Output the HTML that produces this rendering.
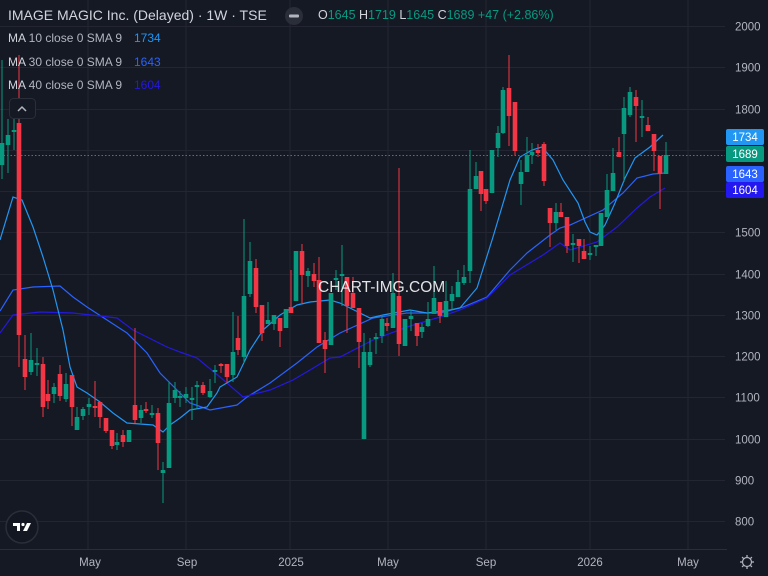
<!DOCTYPE html>
<html><head><meta charset="utf-8">
<style>
html,body{margin:0;padding:0;background:#151924;}
body{width:768px;height:576px;overflow:hidden;position:relative;font-family:"Liberation Sans",sans-serif;}
svg{position:absolute;left:0;top:0}
.t{position:absolute;white-space:nowrap;}
</style></head><body>
<svg id="s" width="768" height="576" xmlns="http://www.w3.org/2000/svg"></svg>
<div class="t" style="left:8px;top:7px;font-size:14px;color:#d1d4dc;">IMAGE MAGIC Inc. (Delayed) · 1W · TSE</div>
<div class="t" style="left:318px;top:8px;font-size:12.5px;color:#d1d4dc;">O<span style="color:#089981">1645</span> H<span style="color:#089981">1719</span> L<span style="color:#089981">1645</span> C<span style="color:#089981">1689</span> <span style="color:#089981">+47 (+2.86%)</span></div>
<div class="t" style="left:8px;top:31px;font-size:12px;color:#b2b5be;"><span style="color:#d1d4dc">MA</span> 10 close 0 SMA 9</div>
<div class="t" style="left:134px;top:31px;font-size:12px;color:#2196f3;">1734</div>
<div class="t" style="left:8px;top:55px;font-size:12px;color:#b2b5be;"><span style="color:#d1d4dc">MA</span> 30 close 0 SMA 9</div>
<div class="t" style="left:134px;top:55px;font-size:12px;color:#2962ff;">1643</div>
<div class="t" style="left:8px;top:78px;font-size:12px;color:#b2b5be;"><span style="color:#d1d4dc">MA</span> 40 close 0 SMA 9</div>
<div class="t" style="left:134px;top:78px;font-size:12px;color:#2418e0;">1604</div>
<div class="t" style="left:318px;top:279px;font-size:15.5px;color:rgba(255,255,255,0.88);">CHART-IMG.COM</div>
<script>
var s=document.getElementById('s'),h='';
function Y(p){return 26+(2000-p)*0.4125;}
[88,186,290,388,486,590,688].forEach(function(x){h+='<line x1="'+x+'" y1="0" x2="'+x+'" y2="549" stroke="#232632" stroke-width="1"/>';});
for(var p=2000;p>=800;p-=100){var y=Math.round(Y(p))+0.5;h+='<line x1="0" y1="'+y+'" x2="725" y2="'+y+'" stroke="#232632" stroke-width="1"/>';
h+='<text x="735" y="'+(y+4)+'" font-size="11.5" fill="#b2b5be" font-family="Liberation Sans,sans-serif">'+p+'</text>';}
h+='<line x1="0" y1="549.5" x2="727" y2="549.5" stroke="#2a2e39"/>';
[['May',90],['Sep',187],['2025',291],['May',388],['Sep',486],['2026',590],['May',688]].forEach(function(m){h+='<text x="'+m[1]+'" y="566" text-anchor="middle" font-size="11.5" fill="#b2b5be" font-family="Liberation Sans,sans-serif">'+m[0]+'</text>';});
function pl(pts,c){h+='<polyline fill="none" stroke="'+c+'" stroke-width="1.2" points="'+pts+'"/>';}
pl('0,311 13,290 33,287 60,286 73,297 87,307 107,320 127,333 147,353 160,373 175,388 190,403 210,410 237,405 247,397 270,383 297,363 317,347 340,333 373,318 407,313 440,313 463,307 487,297 510,270 527,253 550,235 560,228 570,225 603,210 623,193 637,178 653,174 665,173','#2962ff');
pl('0,333 13,315 40,312 73,313 100,316 117,318 133,330 147,337 167,347 180,352 197,358 220,377 243,397 270,390 293,380 310,370 330,358 340,357 373,340 407,327 440,317 460,310 487,298 510,275 543,255 560,243 570,250 597,242 617,227 637,208 650,197 665,188','#2418e0');
pl('0,240 13,197 22,200 33,227 43,257 53,290 63,330 70,367 77,387 87,393 100,402 113,413 127,423 140,424 153,425 163,432 170,425 180,418 190,410 207,407 217,393 220,387 237,377 250,350 263,330 280,315 297,305 310,302 330,300 340,303 370,318 383,315 410,310 427,313 450,310 460,308 477,288 493,237 510,180 520,157 532,150 542,147 553,160 563,180 578,203 585,222 590,232 597,235 605,225 615,203 625,178 635,158 650,147 663,135','#2196f3');
var C=[
['g',2,60,179,143,165],['g',8,119,173,135,145],['g',14,119,150,130,132],['r',19,55,367,123,335],['r',25,335,390,359,377],['g',31,333,375,360,372],['g',37,348,376,363,365],['r',43,357,417,364,407],['r',48,380,409,394,401],['g',54,383,403,387,394],['r',60,365,401,374,396],['g',66,373,402,384,399],['r',72,375,426,375,407],['g',77,407,430,417,430],['g',83,407,420,409,416],['g',89,398,415,404,407],['r',95,381,417,406,408],['r',100,402,428,402,417],['r',106,418,433,418,431],['r',112,430,449,430,446],['g',117,433,450,442,445],['r',123,430,447,435,442],['g',129,430,442,430,442],['r',135,328,423,405,420],['g',141,405,423,410,418],['r',146,402,413,409,411],['g',152,405,418,413,415],['r',158,408,470,413,443],['g',163,462,503,470,473],['g',169,382,468,403,468],['g',175,382,403,390,398],['g',180,391,407,396,398],['g',186,387,403,394,398],['g',192,387,420,398,400],['g',197,381,409,385,387],['r',203,382,395,385,393],['g',210,379,398,391,397],['g',215,365,383,370,372],['r',221,363,373,364,366],['r',227,364,383,364,377],['g',233,312,382,352,375],['r',238,316,355,338,350],['g',244,219,363,296,357],['g',250,242,297,261,294],['r',256,259,313,268,307],['r',262,305,341,305,333],['g',268,302,324,320,324],['g',274,315,330,315,324],['r',280,318,347,318,331],['g',286,309,328,309,328],['r',291,270,313,307,313],['g',296,251,301,251,301],['r',302,244,303,251,275],['g',308,268,287,271,276],['r',314,263,287,274,281],['r',319,257,343,280,343],['r',325,332,373,340,349],['g',331,293,345,293,345],['g',336,270,290,278,280],['g',342,245,306,274,276],['r',347,277,333,277,306],['r',353,277,308,293,308],['r',359,308,368,308,342],['g',364,333,439,352,439],['g',370,338,367,352,365],['g',376,333,354,337,339],['g',382,315,343,319,336],['r',387,318,331,323,326],['g',393,273,328,293,328],['r',399,168,356,296,344],['g',405,319,346,319,346],['g',411,310,331,316,319],['r',417,323,346,323,336],['g',422,323,338,327,332],['g',428,302,327,319,326],['g',434,266,314,298,314],['r',440,302,323,302,316],['g',446,281,317,301,317],['g',452,286,310,294,301],['g',458,270,297,282,297],['g',464,265,285,277,283],['g',470,150,283,189,271],['g',476,162,189,176,189],['r',481,171,211,171,194],['r',486,189,204,189,201],['g',492,150,193,150,193],['g',498,126,157,133,148],['g',503,87,134,90,133],['r',509,55,146,88,116],['r',515,102,155,102,151],['g',521,160,205,172,184],['g',527,137,172,155,172],['g',532,143,164,152,155],['r',538,144,157,150,153],['r',544,142,186,144,181],['r',550,208,247,208,223],['g',556,203,230,212,223],['r',561,203,217,212,217],['r',567,217,253,217,246],['g',573,234,262,243,245],['r',579,239,263,239,246],['r',584,239,259,251,259],['g',590,246,260,253,255],['g',596,245,256,245,247],['g',601,213,246,213,246],['g',607,174,217,190,217],['g',613,148,191,173,191],['r',619,137,157,152,157],['g',624,97,182,108,134],['g',630,87,117,92,115],['r',636,90,142,97,106],['g',642,100,137,116,118],['r',648,117,131,125,131],['r',654,134,171,134,151],['r',660,156,209,156,174],['g',666,142,174,155,174]];
C.forEach(function(c){var col=c[0]=='g'?'#089981':'#f23645';var x=c[1];
h+='<rect x="'+(x-0.5)+'" y="'+c[2]+'" width="1" height="'+(c[3]-c[2])+'" fill="'+col+'"/>';
var bh=Math.max(1.5,c[5]-c[4]);h+='<rect x="'+(x-2.3)+'" y="'+c[4]+'" width="4.6" height="'+bh+'" fill="'+col+'"/>';});
h+='<line x1="0" y1="155.5" x2="725" y2="155.5" stroke="#089981" stroke-width="1" stroke-dasharray="1.5,2"/>';
[['1734',129,'#2196f3'],['1689',146,'#089981'],['1643',166,'#2962ff'],['1604',182,'#2418f0']].forEach(function(l){
h+='<rect x="726" y="'+l[1]+'" width="38" height="16" rx="2" fill="'+l[2]+'"/><text x="745" y="'+(l[1]+12)+'" text-anchor="middle" font-size="11.5" fill="#fff" font-family="Liberation Sans,sans-serif">'+l[0]+'</text>';});
h+='<circle cx="294" cy="16" r="9" fill="#2a2e39"/><rect x="289" y="14.5" width="10" height="3" rx="1" fill="#b2b5be"/>';
h+='<rect x="9.5" y="98.5" width="26" height="20" rx="4" fill="#151924" stroke="#2a2e39"/><polyline points="18,111 22,107 26,111" fill="none" stroke="#b2b5be" stroke-width="1.5"/>';
h+='<circle cx="22" cy="527" r="16" fill="#131722" stroke="#2a2e39" stroke-width="1.5"/><path d="M13,523 h7 v8 h-3 v-5 h-4 z" fill="#fff"/><circle cx="23" cy="524.5" r="1.6" fill="#fff"/><path d="M27,523 h4 l-4,8 h-4 z" fill="#fff"/>';
h+='<circle cx="747" cy="562" r="4.5" fill="none" stroke="#b2b5be" stroke-width="1.2"/>';
for(var a=0;a<8;a++){var r=a*Math.PI/4;h+='<line x1="'+(747+5*Math.cos(r))+'" y1="'+(562+5*Math.sin(r))+'" x2="'+(747+7*Math.cos(r))+'" y2="'+(562+7*Math.sin(r))+'" stroke="#b2b5be" stroke-width="1.3"/>';}
s.innerHTML=h;
</script>
</body></html>
